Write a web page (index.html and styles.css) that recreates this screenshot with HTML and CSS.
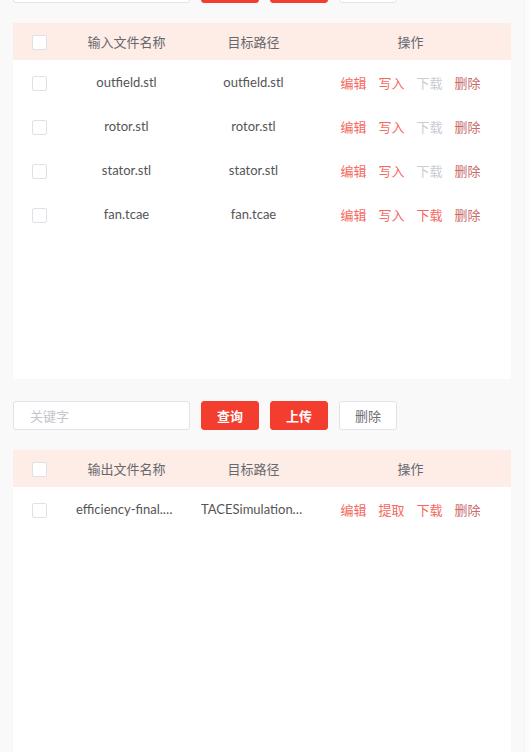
FILE: index.html
```html
<!DOCTYPE html>
<html lang="zh">
<head>
  <meta charset="UTF-8">
  <title>文件管理</title>
  <link rel="stylesheet" href="styles.css">
</head>
<body>
  <div class="app">
    <div class="page">
      <div class="section">
        <div class="toolbar">
          <input type="text" class="search" placeholder="关键字">
          <button class="btn btn-primary">查询</button>
          <button class="btn btn-primary">上传</button>
          <button class="btn">删除</button>
        </div>
        <div class="panel panel-input">
          <table class="file-table">
            <colgroup>
              <col class="col-check">
              <col class="col-name">
              <col class="col-path">
              <col>
            </colgroup>
            <thead>
              <tr>
                <th><span class="checkbox"></span></th>
                <th>输入文件名称</th>
                <th>目标路径</th>
                <th class="ops">操作</th>
              </tr>
            </thead>
            <tbody>
              <tr>
                <td><span class="checkbox"></span></td>
                <td>outfield.stl</td>
                <td class="path">outfield.stl</td>
                <td class="ops"><a class="link">编辑</a><a class="link">写入</a><a class="link disabled">下载</a><a class="link danger">删除</a></td>
              </tr>
              <tr>
                <td><span class="checkbox"></span></td>
                <td>rotor.stl</td>
                <td class="path">rotor.stl</td>
                <td class="ops"><a class="link">编辑</a><a class="link">写入</a><a class="link disabled">下载</a><a class="link danger">删除</a></td>
              </tr>
              <tr>
                <td><span class="checkbox"></span></td>
                <td>stator.stl</td>
                <td class="path">stator.stl</td>
                <td class="ops"><a class="link">编辑</a><a class="link">写入</a><a class="link disabled">下载</a><a class="link danger">删除</a></td>
              </tr>
              <tr>
                <td><span class="checkbox"></span></td>
                <td>fan.tcae</td>
                <td class="path">fan.tcae</td>
                <td class="ops"><a class="link">编辑</a><a class="link">写入</a><a class="link">下载</a><a class="link danger">删除</a></td>
              </tr>
            </tbody>
          </table>
        </div>
      </div>

      <div class="section">
        <div class="toolbar">
          <input type="text" class="search" placeholder="关键字">
          <button class="btn btn-primary">查询</button>
          <button class="btn btn-primary">上传</button>
          <button class="btn">删除</button>
        </div>
        <div class="panel panel-output">
          <table class="file-table">
            <colgroup>
              <col class="col-check">
              <col class="col-name">
              <col class="col-path">
              <col>
            </colgroup>
            <thead>
              <tr>
                <th><span class="checkbox"></span></th>
                <th>输出文件名称</th>
                <th>目标路径</th>
                <th class="ops">操作</th>
              </tr>
            </thead>
            <tbody>
              <tr>
                <td><span class="checkbox"></span></td>
                <td><div class="cell-text">efficiency-final.csv</div></td>
                <td class="path"><div class="cell-text">TACESimulationResult/efficiency-final.csv</div></td>
                <td class="ops"><a class="link">编辑</a><a class="link">提取</a><a class="link">下载</a><a class="link danger">删除</a></td>
              </tr>
            </tbody>
          </table>
        </div>
      </div>
    </div>
    <div class="scroll-track"></div>
  </div>
</body>
</html>
```

FILE: styles.css
```css
html, body {
  margin: 0;
  background: #f9f9f9;
  font-family: Lato, "Noto Sans CJK SC", sans-serif;
  font-size: 13px;
  color: #555;
  overflow: hidden;
}
.app {
  display: flex;
  height: 752px;
}
.page {
  flex: 1;
  padding: 0 13px 0 13px;
  margin-top: -26px;
}
.scroll-track {
  width: 5px;
  background: #fcfcfc;
  border-left: 1px solid #f3f3f3;
}
.section + .section {
  margin-top: 22px;
}
.toolbar {
  display: flex;
  gap: 11px;
  height: 29px;
}
.search {
  box-sizing: border-box;
  width: 177px;
  height: 29px;
  padding: 0 16px;
  border: 1px solid #e1e3e8;
  border-radius: 3px;
  background: #fff;
  font-family: inherit;
  font-size: 13px;
  color: #555;
  outline: none;
}
.search::placeholder {
  color: #c3c6cd;
}
.btn {
  box-sizing: border-box;
  width: 58px;
  height: 29px;
  border: 1px solid #e1e3e8;
  border-radius: 3px;
  background: #fff;
  color: #6b6e74;
  font-family: inherit;
  font-size: 13px;
  cursor: pointer;
}
.btn-primary {
  background: #f33d2f;
  border-color: #f33d2f;
  color: #fff;
  font-weight: bold;
}
.panel {
  margin-top: 20px;
  background: #fff;
}
.panel-input {
  height: 356px;
}
.panel-output {
  height: 400px;
}
.file-table {
  width: 100%;
  table-layout: fixed;
  border-collapse: collapse;
}
.col-check {
  width: 50px;
}
.col-name {
  width: 127px;
}
.col-path {
  width: 127px;
}
.file-table th {
  height: 37px;
  padding: 0;
  background: #feece7;
  font-weight: normal;
  color: #66686d;
  text-align: center;
}
.file-table td {
  height: 44px;
  padding: 0 13px;
  text-align: center;
  color: #555;
}
.file-table td.path {
  padding: 0 11px;
}
.file-table th:first-child,
.file-table td:first-child {
  padding: 0 0 0 2px;
}
.file-table .ops {
  padding: 0 19px 0 12px;
}
.cell-text {
  overflow: hidden;
  white-space: nowrap;
  text-overflow: ellipsis;
}
.checkbox {
  display: inline-block;
  box-sizing: border-box;
  width: 15px;
  height: 15px;
  border: 1px solid #dfe1e7;
  border-radius: 2px;
  background: #fff;
  vertical-align: middle;
}
.link {
  color: #f5685e;
  cursor: pointer;
}
.link + .link {
  margin-left: 12px;
}
.link.disabled {
  color: #c9ccd3;
}
.link.danger {
  color: #c96a6a;
}
```
